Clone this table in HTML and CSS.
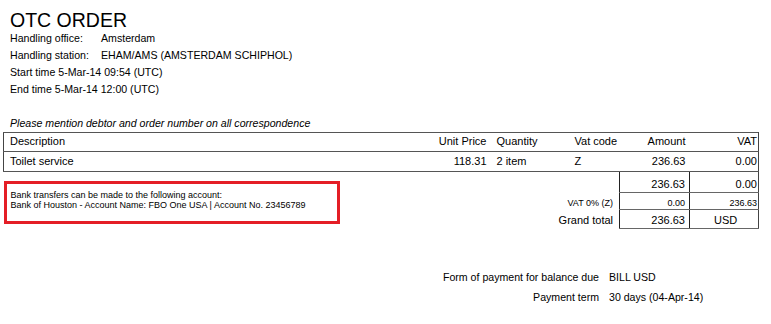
FILE: index.html
```html
<!DOCTYPE html>
<html>
<head>
<meta charset="utf-8">
<link rel="stylesheet" href="styles.css">
</head>
<body>
<div class="page">
  <h1 class="title">OTC ORDER</h1>
  <div class="info">
    <span>Handling office:</span><span>Amsterdam</span>
    <span>Handling station:</span><span>EHAM/AMS (AMSTERDAM SCHIPHOL)</span>
  </div>
  <div class="line">Start time 5-Mar-14 09:54 (UTC)</div>
  <div class="line">End time 5-Mar-14 12:00 (UTC)</div>
  <div class="line notice">Please mention debtor and order number on all correspondence</div>
  <table class="items">
    <colgroup>
      <col class="c-desc"><col class="c-unit"><col class="c-qty"><col class="c-code"><col class="c-amt"><col class="c-vat">
    </colgroup>
    <tr class="head">
      <td class="first">Description</td>
      <td class="r">Unit Price</td>
      <td class="qty">Quantity</td>
      <td class="code">Vat code</td>
      <td class="r amt">Amount</td>
      <td class="r vat last">VAT</td>
    </tr>
    <tr class="item">
      <td class="first">Toilet service</td>
      <td class="r">118.31</td>
      <td class="qty">2 item</td>
      <td class="code">Z</td>
      <td class="r amt">236.63</td>
      <td class="r vat last">0.00</td>
    </tr>
    <tr class="tot t1">
      <td class="bankcell" colspan="2" rowspan="3">
        <div class="bank">
          <div>Bank transfers can be made to the following account:</div>
          <div>Bank of Houston - Account Name: FBO One USA | Account No. 23456789</div>
        </div>
      </td>
      <td class="label" colspan="2"></td>
      <td class="r amt box">236.63</td>
      <td class="r vat box last">0.00</td>
    </tr>
    <tr class="tot t2 small">
      <td class="label" colspan="2">VAT 0% (Z)</td>
      <td class="r amt box">0.00</td>
      <td class="r vat box last">236.63</td>
    </tr>
    <tr class="tot t3">
      <td class="label" colspan="2">Grand total</td>
      <td class="r amt box">236.63</td>
      <td class="cur box last">USD</td>
    </tr>
  </table>
  <div class="payment">
    <span class="plabel">Form of payment for balance due</span><span>BILL USD</span>
    <span class="plabel">Payment term</span><span>30 days (04-Apr-14)</span>
  </div>
</div>
</body>
</html>
```
FILE: styles.css
```css
html, body {
  margin: 0;
  padding: 0;
  background: #fff;
}
body {
  font-family: "Liberation Sans", Arial, sans-serif;
  color: #000;
}
.page {
  padding-top: 10px;
}
.title {
  margin: 0;
  padding-left: 10px;
  font-size: 19.5px;
  line-height: 20px;
  font-weight: normal;
}
.info {
  display: grid;
  grid-template-columns: 91px auto;
  padding-left: 10px;
  font-size: 10.6px;
  line-height: 17px;
}
.line {
  padding-left: 10px;
  font-size: 10.6px;
  line-height: 17px;
}
.notice {
  margin-top: 17px;
  font-style: italic;
}
.items {
  margin-left: 3px;
  border-collapse: collapse;
  table-layout: fixed;
  width: 755px;
  font-size: 11px;
  line-height: 16px;
}
.c-desc { width: 427px; }
.c-unit { width: 60px; }
.c-qty { width: 80px; }
.c-code { width: 49px; }
.c-amt { width: 70px; }
.c-vat { width: 69px; }
.items td {
  padding: 0;
  white-space: nowrap;
  vertical-align: top;
}
.head td, .item td {
  border-top: 1px solid #555;
  border-bottom: 1px solid #555;
}
.head td { padding-bottom: 2px; }
.item td { padding-top: 1px; padding-bottom: 2px; }
.first { border-left: 1px solid #444; padding-left: 6px !important; }
.last { border-right: 1px solid #444; }
.r { text-align: right; }
.items td.r { padding-right: 4px; }
.items td.vat { padding-right: 1px; }
.items td.qty { padding-left: 6px; }
.items td.code { padding-left: 4px; }
.items td.label {
  text-align: right;
  padding-right: 6px;
}
.items td.box {
  border-left: 1px solid #222;
  border-bottom: 1px solid #666;
}
.t1 td.box { border-top: 1px solid #555; }
.t1 td { padding-top: 4px; }
.t2 td { padding-top: 4px; font-size: 9px; line-height: 12px; }
.t3 td { padding-top: 2px; }
.items td.cur {
  padding-left: 24px;
}
.items td.bankcell {
  padding: 9px 0 0 0;
  vertical-align: top;
  font-size: 9px;
  line-height: 10px;
}
.bank {
  width: 322px;
  border: 3px solid #e41e26;
  padding: 6px 4px 11px 4px;
}
.payment {
  display: grid;
  grid-template-columns: 599px auto;
  column-gap: 10px;
  margin-top: 38px;
  font-size: 10.6px;
  line-height: 20px;
}
.plabel { text-align: right; }
```
